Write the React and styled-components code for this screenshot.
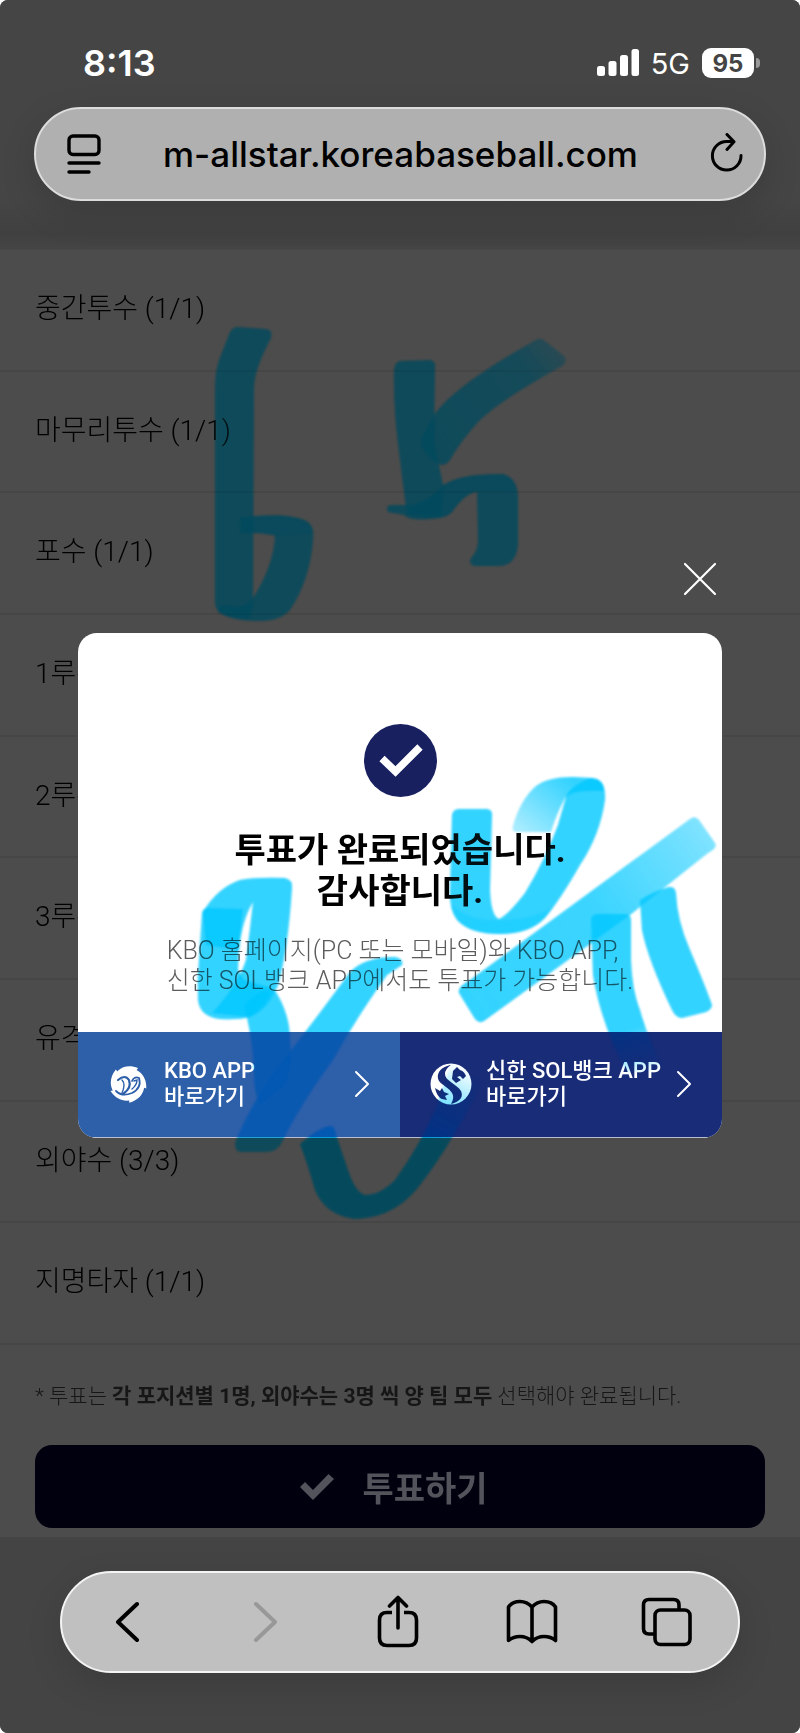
import React from 'react';
import styled, { createGlobalStyle } from 'styled-components';

const GlobalStyle = createGlobalStyle`
  * {
    box-sizing: border-box;
  }

  body {
    margin: 0;
    background: #fff;
    font-family: Roboto, 'Noto Sans CJK KR', sans-serif;
  }

  button,
  input {
    margin: 0;
    padding: 0;
    border: 0;
    background: none;
    color: inherit;
    font: inherit;
  }

  p,
  h2,
  ul {
    margin: 0;
    padding: 0;
  }

  svg {
    display: block;
    flex-shrink: 0;
  }
`;

const Screen = styled.div`
  position: relative;
  isolation: isolate;
  overflow: hidden;
  display: flex;
  flex-direction: column;
  min-height: 100vh;
  border-radius: 8px;
  background: #4c4c4c;
`;

const TopArea = styled.header`
  padding: 44px 34px 48px;
  background: linear-gradient(#454545 80%, #404040 94%, #454545);
  border-bottom: 1px solid #484848;
`;

const StatusBar = styled.div`
  display: flex;
  justify-content: space-between;
  align-items: center;
  padding: 0 6px 0 49px;
  height: 38px;
  color: #fff;
  font-family: Inter, 'Liberation Sans', sans-serif;

  > .time {
    font-size: 36px;
    font-weight: 600;
  }

  > .status {
    display: flex;
    align-items: center;
    gap: 12px;
    font-size: 29px;
  }
`;

const Battery = styled.span`
  position: relative;
  display: flex;
  justify-content: center;
  align-items: center;
  margin-right: 6px;
  width: 52px;
  height: 30px;
  border-radius: 9px;
  background: #fff;
  color: #444;
  font-size: 24px;
  font-weight: 700;

  &::after {
    content: '';
    position: absolute;
    left: 54px;
    width: 4px;
    height: 10px;
    border-radius: 0 4px 4px 0;
    background: #999;
  }
`;

const AddressBar = styled.div`
  display: flex;
  align-items: center;
  margin-top: 25px;
  padding: 0 20px 0 31px;
  height: 94px;
  border: 2px solid #dcdcdc;
  border-radius: 47px;
  background: #b0b0b0;
  box-shadow: 0 12px 36px rgba(0, 0, 0, 0.14);
  color: #000;

  > input {
    flex: 1;
    min-width: 0;
    padding-right: 10px;
    font-family: Inter, 'Liberation Sans', sans-serif;
    font-size: 35px;
    font-weight: 500;
    text-align: center;
    outline: none;
  }
`;

const PositionList = styled.ul`
  flex: 1;
  display: flex;
  flex-direction: column;
  list-style: none;

  > li {
    flex: 1;
    display: flex;
    align-items: center;
    padding: 0 35px 2px;
    border-bottom: 2px solid #464646;
    color: #000;
    font-size: 28px;
    font-weight: 300;
    line-height: 40px;
  }
`;

const VoteArea = styled.section`
  padding: 36px 35px 9px;

  > p {
    margin-bottom: 34px;
    color: #161616;
    font-size: 21px;
    font-weight: 300;
    line-height: 30px;
    white-space: nowrap;
  }

  strong {
    font-weight: 700;
  }
`;

const VoteButton = styled.button`
  display: flex;
  justify-content: center;
  align-items: center;
  gap: 28px;
  padding-right: 12px;
  width: 100%;
  height: 83px;
  border-radius: 17px;
  background: #00000f;
  color: #53535b;
  font-size: 34px;
  font-weight: 700;
`;

const BottomArea = styled.footer`
  padding: 34px 60px 60px;
  background: #444;
`;

const Toolbar = styled.nav`
  display: grid;
  grid-template-columns: repeat(5, 1fr);
  padding-right: 4px;
  height: 102px;
  border: 2px solid #f4f4f4;
  border-radius: 51px;
  background: #c0c0c0;
  box-shadow: 0 12px 36px rgba(0, 0, 0, 0.12);
`;

const ToolButton = styled.button`
  display: flex;
  justify-content: center;
  align-items: center;
  color: ${({ $muted }) => ($muted ? '#989898' : '#000')};
`;

const Overlay = styled.div`
  position: absolute;
  inset: 0;
  display: flex;
  flex-direction: column;
  justify-content: center;
  padding: 0 78px 34px;
`;

const CloseButton = styled.button`
  align-self: flex-end;
  margin: 0 5px 37px 0;
  color: #fff;
`;

const Modal = styled.div`
  overflow: hidden;
  border-radius: 19px;
  background: #fff;
  text-align: center;

  > svg {
    margin: 91px auto 33px;
  }

  > h2 {
    color: #000;
    font-size: 34px;
    font-weight: 700;
    line-height: 41px;
  }

  > p {
    margin: 24px auto 36px;
    width: fit-content;
    color: #5c5c5c;
    font-size: 25px;
    font-weight: 300;
    line-height: 30px;
    text-align: left;
    white-space: nowrap;
  }
`;

const AppLinks = styled.div`
  display: flex;
  border-bottom: 1px solid #b8bed0;
`;

const AppLink = styled.a`
  flex: 1 1 50%;
  display: flex;
  align-items: center;
  gap: 14px;
  padding: 0 30px;
  height: 105px;
  background: ${({ $color }) => $color};
  color: #fff;
  font-size: 22px;
  font-weight: 500;
  line-height: 26px;
  text-align: left;
  text-decoration: none;
  white-space: nowrap;

  > span {
    flex: 1;
    min-width: 0;
  }
`;

const Ink = styled.svg`
  position: absolute;
  top: 0;
  left: 0;
  width: 100%;
  pointer-events: none;
  mix-blend-mode: ${({ $blend }) => $blend};
  opacity: ${({ $alpha }) => $alpha};
`;

const positions = [
  '중간투수 (1/1)',
  '마무리투수 (1/1)',
  '포수 (1/1)',
  '1루수 (1/1)',
  '2루수 (1/1)',
  '3루수 (1/1)',
  '유격수 (1/1)',
  '외야수 (3/3)',
  '지명타자 (1/1)',
];

const SignalIcon = () => (
  <svg width='42' height='28' viewBox='0 0 42 28' fill='#fff'>
    <rect x='0' y='17' width='8' height='10' rx='2.5' />
    <rect x='11.5' y='12' width='8' height='15' rx='2.5' />
    <rect x='23' y='6' width='8' height='21' rx='2.5' />
    <rect x='34.5' y='0' width='7.5' height='27' rx='2.5' />
  </svg>
);

const PageMenuIcon = () => (
  <svg width='34' height='40' viewBox='0 0 34 40' fill='none' stroke='currentColor' strokeWidth='3.400' strokeLinecap='round'>
    <rect x='2' y='2' width='30' height='18.5' rx='4' />
    <path d='M2 29h30M2 38h20' />
  </svg>
);

const ReloadIcon = () => (
  <svg width='34' height='42' viewBox='0 0 34 42' fill='none' stroke='currentColor' strokeWidth='3' strokeLinecap='round' strokeLinejoin='round'>
    <path d='M31 22.500A14.300 14.300 0 1 1 17 8.500H23' />
    <path d='M17 1.500L24 8.800L17 16.500' />
  </svg>
);

const ChevronIcon = ({ left }) => (
  <svg width='26' height='44' viewBox='0 0 26 44' fill='none' stroke='currentColor' strokeWidth='4' strokeLinecap='round' strokeLinejoin='round'>
    <path d={left ? 'M21 4L2 22L21 40' : 'M5 4L24 22L5 40'} />
  </svg>
);

const ShareIcon = () => (
  <svg width='44' height='54' viewBox='0 0 44 54' fill='none' stroke='currentColor' strokeWidth='3.600' strokeLinecap='round' strokeLinejoin='round'>
    <path d='M16 17.500H11Q3.500 17.500 3.500 25V43Q3.500 50.500 11 50.500H33Q40.500 50.500 40.500 43V25Q40.500 17.500 33 17.500H28' strokeLinecap='butt' />
    <path d='M22 33V3M13.500 11L22 2.500L30.500 11' />
  </svg>
);

const BookIcon = () => (
  <svg width='54' height='46' viewBox='0 0 54 46' fill='none' stroke='currentColor' strokeWidth='3.600' strokeLinecap='round' strokeLinejoin='round'>
    <path d='M27 8Q22 2.500 15 2.500Q7 2.500 3.500 8V41.500Q8 37.500 15 37.500Q22 37.500 27 42.500Q32 37.500 39 37.500Q46 37.500 50.500 41.500V8Q47 2.500 39 2.500Q32 2.500 27 8V42' />
  </svg>
);

const TabsIcon = () => (
  <svg width='52' height='50' viewBox='0 0 52 50' fill='none' stroke='currentColor' strokeWidth='3.600' strokeLinecap='butt'>
    <path d='M38 12V8Q38 2.500 32.500 2.500H8Q2.500 2.500 2.500 8V31.500Q2.500 37 8 37H13' />
    <rect x='14' y='13' width='35' height='34.500' rx='5.500' />
  </svg>
);

const CloseIcon = () => (
  <svg width='34' height='34' viewBox='0 0 34 34' fill='none' stroke='currentColor' strokeWidth='2.200' strokeLinecap='round'>
    <path d='M2 2L32 32M32 2L2 32' />
  </svg>
);

const CheckBadge = () => (
  <svg width='73' height='73' viewBox='0 0 73 73'>
    <circle cx='36.5' cy='36.5' r='36.5' fill='#182060' />
    <path d='M18 34.500L31.500 47.500L56 23' fill='none' stroke='#fff' strokeWidth='7.500' />
  </svg>
);

const CheckIcon = () => (
  <svg width='34' height='26' viewBox='0 0 34 26'>
    <path d='M0 13L5 8L13 16L28.500 0L34 5L13 26Z' fill='currentColor' />
  </svg>
);

const KboLogo = () => (
  <svg width='42' height='42' viewBox='0 0 42 42'>
    <g fill='#fff'>
      {[0, 72, 144, 216, 288].map(angle => (
        <path key={angle} d='M5 18C6 7 17 0 30 5Q28 9 21 11Z' transform={`rotate(${angle} 20 21)`} />
      ))}
      <circle cx='20' cy='21' r='15.5' />
    </g>
    <g fill='none' stroke='#2e60aa' strokeLinecap='round'>
      <path d='M10 17Q17 11 21 17Q24 25 15 31' strokeWidth='2.200' />
      <path d='M14 17Q18 21 14 30' strokeWidth='1.400' />
      <path d='M24 18Q26 13 31 15Q34 25 24 30Q14 34 8 28' strokeWidth='1.800' />
      <path d='M26 18L29 17Q29 22 24 26' strokeWidth='1.400' />
    </g>
  </svg>
);

const SolLogo = () => (
  <svg width='42' height='42' viewBox='0 0 42 42'>
    <circle cx='21' cy='21' r='20.5' fill='#fff' />
    <g fill='#182c78'>
      <path d='M21 2C8 4 4 15 12 21C20 27 27 31 21 41Q35 37 31 28C27 21 15 18 15 11Q15 6 21 2Z' />
      <path d='M23 8L27 4L30 7Q34 8 36 13L33 16L30 13L27 14L31 17L26 20L22 16Z' />
      <path d='M5 25L10 28L12 25L14 29L19 31L15 33L17 37L12 36Q7 34 5 25Z' />
    </g>
  </svg>
);

const LinkArrow = () => (
  <svg width='16' height='28' viewBox='0 0 16 28' fill='none' stroke='#fff' strokeWidth='2' strokeLinecap='round' strokeLinejoin='round'>
    <path d='M2 2L14 14L2 26' />
  </svg>
);

// highlighter strokes drawn by hand over the whole screen
const MarkerInk = ({ id, blend, alpha }) => (
  <Ink viewBox='0 0 800 1733' $blend={blend} $alpha={alpha} aria-hidden='true'>
    <defs>
      <filter id={`${id}-soft`} x='-5%' y='-5%' width='110%' height='110%'>
        <feGaussianBlur stdDeviation='1' />
      </filter>
      <linearGradient id={`${id}-kick`} gradientUnits='userSpaceOnUse' x1='440' y1='440' x2='565' y2='345'>
        <stop offset='0' stopColor='#00c8ff' />
        <stop offset='0.7' stopColor='#00c8ff' stopOpacity='0.9' />
        <stop offset='1' stopColor='#00c8ff' stopOpacity='0.5' />
      </linearGradient>
      <linearGradient id={`${id}-slash`} gradientUnits='userSpaceOnUse' x1='470' y1='1005' x2='710' y2='830'>
        <stop offset='0' stopColor='#00c8ff' />
        <stop offset='0.55' stopColor='#00c8ff' stopOpacity='0.95' />
        <stop offset='1' stopColor='#00c8ff' stopOpacity='0.6' />
      </linearGradient>
      <linearGradient id={`${id}-tail`} gradientUnits='userSpaceOnUse' x1='570' y1='780' x2='525' y2='835'>
        <stop offset='0' stopColor='#00c8ff' />
        <stop offset='1' stopColor='#00c8ff' stopOpacity='0.4' />
      </linearGradient>
      <linearGradient id={`${id}-leg`} gradientUnits='userSpaceOnUse' x1='630' y1='1030' x2='646' y2='1076'>
        <stop offset='0' stopColor='#00c8ff' />
        <stop offset='1' stopColor='#00c8ff' stopOpacity='0' />
      </linearGradient>
      <linearGradient id={`${id}-cup`} gradientUnits='userSpaceOnUse' x1='435' y1='1140' x2='470' y2='1070'>
        <stop offset='0' stopColor='#00c8ff' />
        <stop offset='1' stopColor='#00c8ff' stopOpacity='0' />
      </linearGradient>
    </defs>
    <g fill='#00c8ff' fillOpacity='0.78' filter={`url(#${id}-soft)`}>
      <path d='M238 327L266 329Q273 330 271 338Q254 370 254 388L253 606L250 618Q215 620 215 602L215 388Q215 368 221 355L230 332Q233 327 238 327Z' />
      <path d='M240 518Q285 512 304 520Q315 524 313 540Q310 580 290 610Q280 621 260 621Q235 622 218 612Q217 606 224 605Q245 610 253 598Q274 565 275 535Q258 532 240 533Z' />
      <path d='M240 517Q285 512 304 520Q312 523 313 533L275 536Q258 532 240 533Z' fillOpacity='0.4' />

      <path d='M400 361L430 360Q436 361 435 368L434 440L443 485Q443 505 440 517L407 515Q405 500 400 460Q393 410 394 370Q395 362 400 361Z' />
      <path d='M434 415Q455 385 536 340Q540 337 545 341L564 356Q568 361 562 366Q500 400 478 422Q460 442 450 460Q444 468 437 463Q416 450 423 435Z' fill={`url(#${id}-kick)`} />
      <path d='M388 512Q385 505 392 505L412 505Q430 500 443 485Q462 473 503 474Q517 478 518 495L518 545Q516 565 500 566L474 566Q467 563 472 557Q478 550 478 540L477 492Q465 493 452 512Q446 519 430 519Q410 521 404 515Z' />
      <path d='M412 508Q430 502 443 486Q462 474 503 475Q514 479 516 492L477 491Q465 493 452 512Q446 518 430 518Q415 519 410 515Z' fillOpacity='0.4' />

      <path d='M459 809L487 809Q493 810 492 816L490 890Q491 916 499 919Q508 915 525 893Q545 860 558 825L566 797Q568 788 590 778L597 779Q606 783 605 800Q600 835 580 865Q560 900 545 918Q530 934 500 934Q470 934 457 920Q449 910 450 890L452 815Q453 809 459 809Z' />
      <path d='M513 826Q520 800 536 786Q548 777 573 777L592 778Q604 780 604 791Q572 789 565 798Q556 815 551 832L518 832Q511 832 513 826Z' fill={`url(#${id}-tail)`} />
      <path d='M452 905Q470 922 500 920Q530 920 552 908Q535 934 500 934Q455 934 452 905Z' fillOpacity='0.35' />
      <path d='M459 993Q457 987 470 980L690 819Q695 815 699 820L715 843Q718 848 708 853L630 915L484 1021Q479 1024 475 1019Z' fill={`url(#${id}-slash)`} />
      <path d='M591 920Q591 914 598 914L625 914Q631 914 631 920L631 960Q632 990 640 1010Q648 1040 666 1072L626 1072Q600 1020 593 975Z' fill={`url(#${id}-leg)`} />
      <path d='M640 900Q652 892 669 887Q675 886 676 893Q677 920 690 950Q705 985 712 1005Q712 1009 706 1012L682 1018Q676 1018 672 1010Q648 960 642 930Z' />

      <path d='M202 913Q203 908 208 908L243 909Q239 935 238 970L244 980L272 988Q265 1008 250 1017Q240 1020 220 1019Q200 1017 198 1000Q197 980 199 960Z' />
      <path d='M203 912Q217 888 240 880Q255 877 285 878Q293 880 292 888Q288 950 278 985Q268 1010 250 1017L212 1013Q238 985 246 960Q250 930 253 902Q242 920 239 950L206 945Z' />
      <path d='M244 1005Q265 985 276 992Q290 1015 290 1040Q293 1065 285 1085L260 1105Q253 1090 254 1070Q253 1040 244 1005Z' />
      <path d='M350 972Q365 957 395 957Q404 959 402 965L387 975Q355 1020 333 1060Q300 1105 282 1142Q278 1152 265 1152L240 1152Q233 1150 236 1140Q255 1095 285 1058Q315 1020 350 972Z' />
      <path d='M300 1144Q318 1128 330 1126Q335 1126 336 1135L348 1170Q355 1192 365 1195Q380 1195 395 1180Q420 1145 436 1108L452 1060L488 1070Q455 1140 420 1185Q395 1218 355 1219Q325 1215 315 1190Q308 1165 300 1144Z' fill={`url(#${id}-cup)`} fillOpacity='0.92' />
    </g>
  </Ink>
);

const App = () => {
  return (
    <>
      <GlobalStyle />
      <Screen>
        <TopArea>
          <StatusBar>
            <span className='time'>8:13</span>
            <div className='status'>
              <SignalIcon />
              <span>5G</span>
              <Battery>95</Battery>
            </div>
          </StatusBar>
          <AddressBar>
            <button type='button' aria-label='페이지 메뉴'>
              <PageMenuIcon />
            </button>
            <input type='text' aria-label='주소' defaultValue='m-allstar.koreabaseball.com' />
            <button type='button' aria-label='새로고침'>
              <ReloadIcon />
            </button>
          </AddressBar>
        </TopArea>

        <PositionList>
          {positions.map(position => (
            <li key={position}>{position}</li>
          ))}
        </PositionList>

        <VoteArea>
          <p>
            * 투표는 <strong>각 포지션별 1명, 외야수는 3명 씩 양 팀 모두</strong> 선택해야 완료됩니다.
          </p>
          <VoteButton type='button'>
            <CheckIcon />
            투표하기
          </VoteButton>
        </VoteArea>

        <BottomArea>
          <Toolbar>
            <ToolButton type='button' aria-label='뒤로'>
              <ChevronIcon left />
            </ToolButton>
            <ToolButton type='button' aria-label='앞으로' $muted>
              <ChevronIcon />
            </ToolButton>
            <ToolButton type='button' aria-label='공유'>
              <ShareIcon />
            </ToolButton>
            <ToolButton type='button' aria-label='책갈피'>
              <BookIcon />
            </ToolButton>
            <ToolButton type='button' aria-label='탭'>
              <TabsIcon />
            </ToolButton>
          </Toolbar>
        </BottomArea>

        <Overlay>
          <CloseButton type='button' aria-label='닫기'>
            <CloseIcon />
          </CloseButton>
          <Modal role='dialog' aria-labelledby='vote-done'>
            <CheckBadge />
            <h2 id='vote-done'>
              투표가 완료되었습니다.
              <br />
              감사합니다.
            </h2>
            <p>
              KBO 홈페이지(PC 또는 모바일)와 KBO APP,
              <br />
              신한 SOL뱅크 APP에서도 투표가 가능합니다.
            </p>
            <AppLinks>
              <AppLink href='#kbo' $color='#2e60aa'>
                <KboLogo />
                <span>
                  KBO APP
                  <br />
                  바로가기
                </span>
                <LinkArrow />
              </AppLink>
              <AppLink href='#sol' $color='#182c78'>
                <SolLogo />
                <span>
                  신한 SOL뱅크 APP
                  <br />
                  바로가기
                </span>
                <LinkArrow />
              </AppLink>
            </AppLinks>
          </Modal>
        </Overlay>

        <MarkerInk id='multiply' blend='multiply' alpha={1} />
        <MarkerInk id='film' blend='normal' alpha={0.1} />
      </Screen>
    </>
  );
};

export default App;
